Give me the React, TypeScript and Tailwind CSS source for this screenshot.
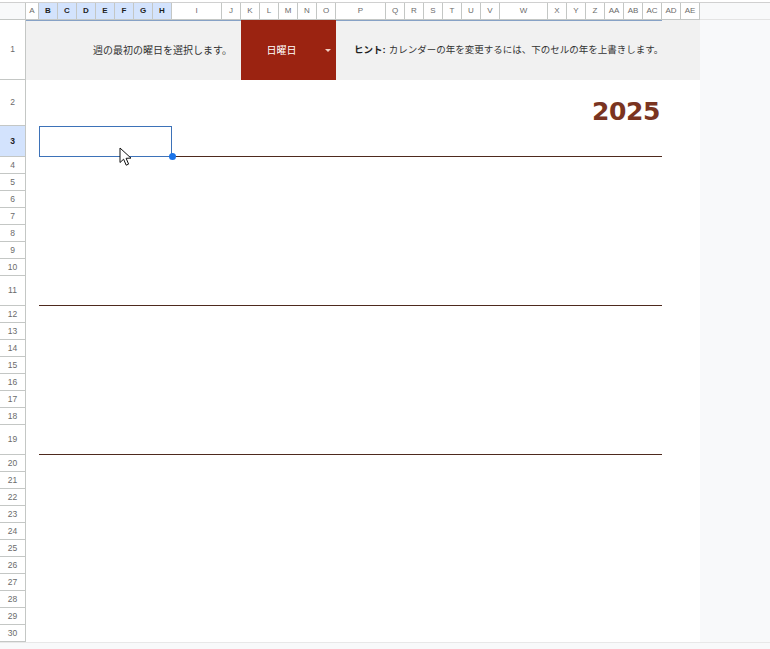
import React from "react";

const GRID =
  "grid grid-cols-[26px_13px_repeat(7,19px)_50px_19px_repeat(5,19px)_50px_repeat(6,19px)_48px_repeat(8,19px)_1fr]";

const LETTERS = [
  "A", "B", "C", "D", "E", "F", "G", "H", "I", "J", "K", "L", "M", "N", "O",
  "P", "Q", "R", "S", "T", "U", "V", "W", "X", "Y", "Z", "AA", "AB", "AC", "AD", "AE",
];
const SELECTED_COLS = new Set(["B", "C", "D", "E", "F", "G", "H"]);

type RowKind = "banner" | "year" | "line" | "plain";

const ROWS: { n: number; h: string; kind: RowKind }[] = [
  { n: 1, h: "h-[60px]", kind: "banner" },
  { n: 2, h: "h-[46px]", kind: "year" },
  { n: 3, h: "h-[31px]", kind: "line" },
  ...[4, 5, 6, 7, 8, 9, 10].map((n) => ({ n, h: "h-[17px]", kind: "plain" as RowKind })),
  { n: 11, h: "h-[30px]", kind: "line" },
  ...[12, 13, 14, 15, 16, 17, 18].map((n) => ({ n, h: "h-[17px]", kind: "plain" as RowKind })),
  { n: 19, h: "h-[30px]", kind: "line" },
  ...[20, 21, 22, 23, 24, 25, 26, 27, 28, 29, 30].map((n) => ({ n, h: "h-[17px]", kind: "plain" as RowKind })),
];

const jp = "font-['Liberation_Sans','Noto_Sans_CJK_JP',sans-serif]";

function RowHeader({ n, active }: { n: number; active: boolean }) {
  return (
    <div
      className={
        "flex items-center justify-center border-r border-b border-[#c4c7c5] text-[8.5px] font-['Liberation_Sans',sans-serif] " +
        (active ? "bg-[#d3e3fd] text-[#1f1f1f] font-bold" : "bg-white text-[#6b6b6b]")
      }
    >
      {n}
    </div>
  );
}

function Cursor() {
  return (
    <svg
      className="absolute left-[80px] top-[21px]"
      width="14"
      height="20"
      viewBox="0 0 14 20"
    >
      <path
        d="M1 1 L1 15.5 L4.6 12.2 L7.2 18.2 L9.6 17.1 L7.1 11.3 L12 11.1 Z"
        fill="#ffffff"
        stroke="#111111"
        strokeWidth="1"
        strokeLinejoin="round"
      />
    </svg>
  );
}

function BodyRow({ n, h, kind }: { n: number; h: string; kind: RowKind }) {
  return (
    <div className={GRID + " " + h}>
      <RowHeader n={n} active={n === 3} />
      {kind === "banner" && (
        <>
          <div
            className={
              "col-span-10 flex items-center justify-end pr-[9px] bg-[#f1f1f1] border-t border-[#87a2c6] text-[10px] text-[#333333] " +
              jp
            }
          >
            週の最初の曜日を選択します。
          </div>
          <div className={"col-span-5 flex items-center bg-[#9b2311] " + jp}>
            <span className="flex-1 text-center text-[10px] text-white">日曜日</span>
            <span className="ml-[3px] mr-[5px] h-0 w-0 border-x-[3px] border-x-transparent border-t-[3px] border-t-[#f2cfc5]" />
          </div>
          <div
            className={
              "col-span-14 flex items-center whitespace-nowrap pl-[18px] bg-[#f1f1f1] border-t border-[#87a2c6] text-[9.5px] text-[#333333] " +
              jp
            }
          >
            <span className="font-bold text-[#1f1f1f]">ヒント:</span>
            <span className="ml-[3px]">カレンダーの年を変更するには、下のセルの年を上書きします。</span>
          </div>
          <div className="col-span-2 bg-[#f1f1f1]" />
          <div className="bg-[#f8f9fa]" />
        </>
      )}
      {kind === "year" && (
        <>
          <div className="col-span-29 flex items-start justify-end pr-[2px] pt-[19px] bg-white">
            <span className="text-[25px] leading-none font-bold tracking-[-0.4px] text-[#7a3421] font-['DejaVu_Sans',sans-serif]">
              2025
            </span>
          </div>
          <div className="col-span-2 bg-white" />
          <div className="bg-[#f8f9fa]" />
        </>
      )}
      {kind === "line" && (
        <>
          <div className="bg-white" />
          <div className="relative col-span-7 bg-white border-b border-[#4e2a1e]">
            {n === 3 && (
              <>
                <div className="absolute inset-x-0 top-0 -bottom-px border border-[#3d72b8]" />
                <div className="absolute -right-[4px] -bottom-[4px] h-[7px] w-[7px] rounded-full bg-[#1a73e8]" />
                <Cursor />
              </>
            )}
          </div>
          <div className="col-span-21 bg-white border-b border-[#4e2a1e]" />
          <div className="col-span-2 bg-white" />
          <div className="bg-[#f8f9fa]" />
        </>
      )}
      {kind === "plain" && (
        <>
          <div className="col-span-31 bg-white" />
          <div className="bg-[#f8f9fa]" />
        </>
      )}
    </div>
  );
}

export default function App() {
  return (
    <div className="w-[770px] h-[649px] overflow-hidden bg-white flex flex-col">
      <div className="h-[2px] bg-white border-b border-[#d0d0d0] box-content" />
      <div className={GRID + " h-[17px]"}>
        <div className="bg-[#f8f9fa] border-r border-b border-[#c4c7c5]" />
        {LETTERS.map((l) => {
          const sel = SELECTED_COLS.has(l);
          return (
            <div
              key={l}
              className={
                "flex items-center justify-center border-r border-b border-[#c4c7c5] text-[8px] font-['Liberation_Sans',sans-serif] " +
                (sel ? "bg-[#d3e3fd] text-[#1f1f1f] font-bold" : "bg-white text-[#6b6b6b]")
              }
            >
              {l}
            </div>
          );
        })}
        <div className="bg-[#f8f9fa] border-b border-[#e3e3e3]" />
      </div>
      {ROWS.map((r) => (
        <BodyRow key={r.n} n={r.n} h={r.h} kind={r.kind} />
      ))}
      <div className="flex-1 bg-[#f8f9fa] border-t border-[#e8e8e8]" />
    </div>
  );
}
